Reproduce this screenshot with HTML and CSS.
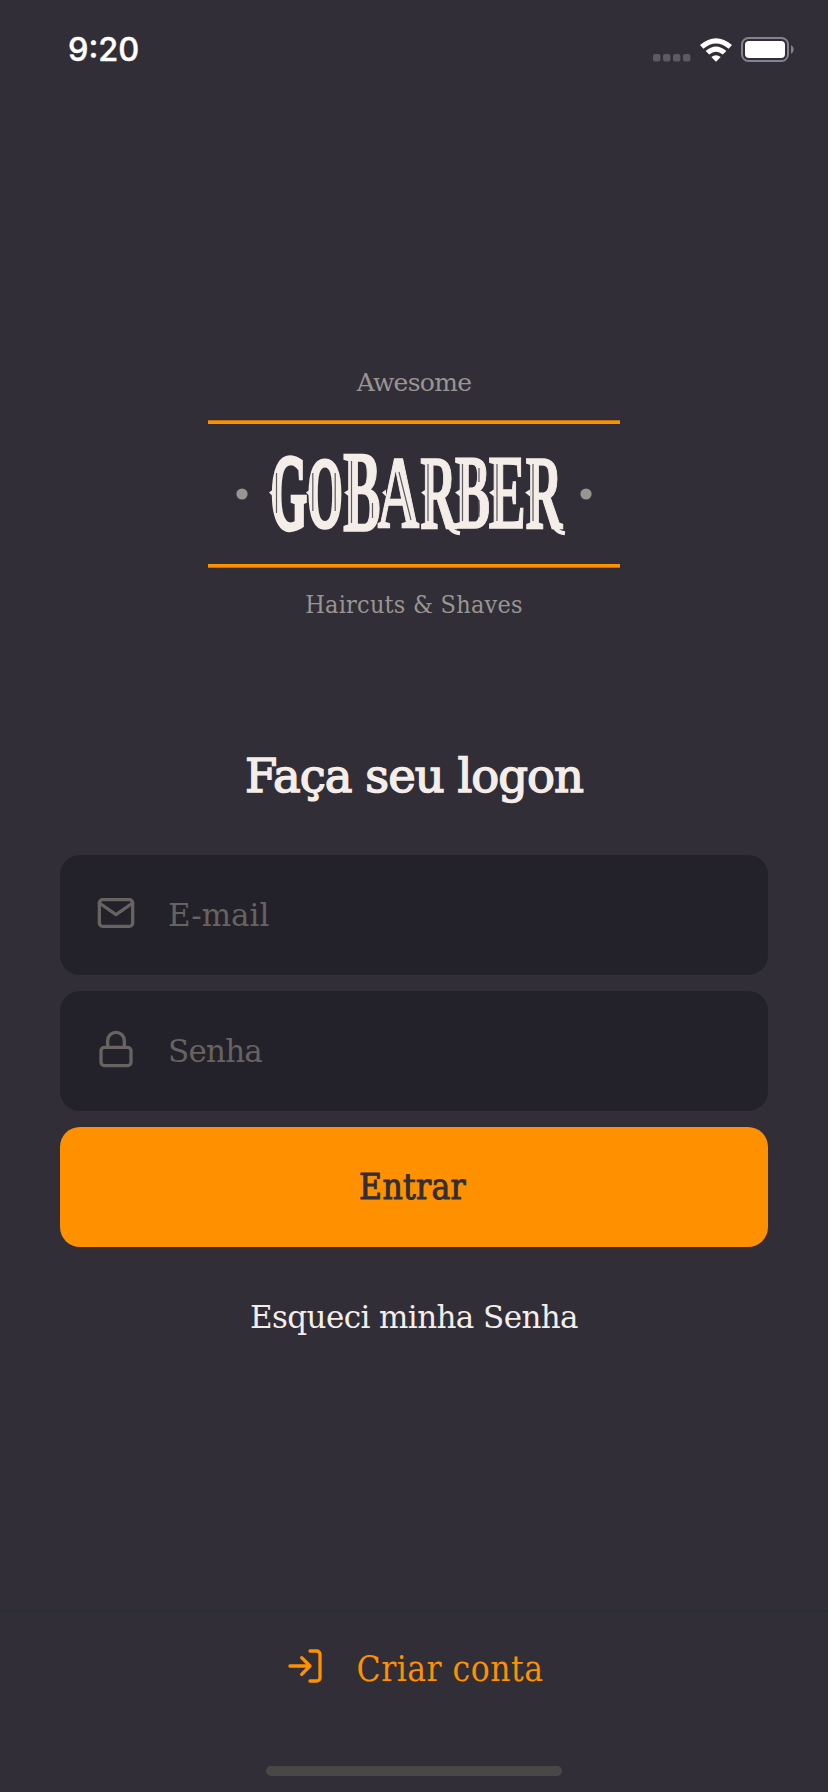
FILE: index.html
```html
<!DOCTYPE html>
<html lang="pt-BR">
<head>
<meta charset="utf-8">
<title>GoBarber</title>
<link rel="stylesheet" href="styles.css">
</head>
<body>
<div class="screen">
  <header class="status">
    <span class="time">9:20</span>
    <div class="indicators">
      <svg class="signal" width="38" height="8" viewBox="0 0 38 8"><rect width="7.4" height="7.4" rx="2"/><rect x="10" width="7.4" height="7.4" rx="2"/><rect x="20" width="7.4" height="7.4" rx="2"/><rect x="30" width="7.4" height="7.4" rx="2"/></svg>
      <svg class="wifi" width="32" height="24" viewBox="0 0 32 24"><path d="M0 7.1Q16-6.5 32 7.1L28.6 10.7Q16 .2 3.4 10.7Z"/><path d="M5.7 13Q16 4 26.3 13L22.8 16.6Q16 11 9.2 16.6Z"/><path d="M11.3 19Q16 15.4 20.7 19L16 23.8Z"/></svg>
      <svg class="battery" width="54" height="26" viewBox="0 0 54 26"><rect class="case" x="1" y="1" width="46" height="23" rx="6.5"/><rect class="charge" x="4" y="4" width="40" height="17" rx="4"/><path class="cap" d="M50 8.3c3.6 1.5 3.6 7 0 8.4Z"/></svg>
    </div>
  </header>
  <main class="content">
    <section class="brand">
      <p class="tagline awesome"><span>Awesome</span></p>
      <svg class="logo" width="412" height="150" viewBox="208 420 412 150">
        <rect class="rule" x="208" y="420.3" width="412" height="3.7"/>
        <rect class="rule" x="208" y="564" width="412" height="3.7"/>
        <circle class="dot" cx="242" cy="494" r="5.6"/><circle class="dot" cx="586" cy="494" r="5.6"/>
        <g class="wordmark">
          <text class="round" transform="translate(270.5 529) scale(.472 1.08)">G</text>
          <text class="round" transform="translate(307.3 526) scale(.455 .99)">O</text>
          <text transform="translate(343 531) scale(.565 1.154)">B</text>
          <text transform="translate(377.5 528) scale(.58 1.03)">A</text>
          <text transform="translate(420.2 528) scale(.5 1.05)">R</text>
          <text transform="translate(454.7 528) scale(.53 1.05)">B</text>
          <text transform="translate(488.5 528) scale(.56 1.05)">E</text>
          <text transform="translate(525.5 528) scale(.51 1.05)">R</text>
        </g>
        <path class="swash" d="M443 505Q447 510 447 518Q448 532 460 533.2M548 505Q552 510 552 518Q553 532 565 533.2"/>
        <path class="spur" d="M269 492.5l4-3v7zM306 492.5l4-3v7zM341 492.5l-4-3v7zM344 492.5l5-3v7zM382 492.5l4-3v7zM421 492.5l5-3v7zM455 492.5l5-3v7zM489 492.5l5-3v7zM525 492.5l5-3v7z"/>
        <path class="inline" d="M276.5 473V513M312.8 473V511M335.2 473V511M428 464V521M462.5 464V521M497 464V521M533 464V521M351.5 461V523M372.5 503V518M479 500V517M479 468V482M399 472L411 520"/>
      </svg>
      <p class="tagline haircuts"><span>Haircuts &amp; Shaves</span></p>
    </section>
    <h1 class="title"><span>Faça seu logon</span></h1>
    <form class="form">
      <label class="field">
        <svg class="icon" viewBox="0 0 24 24"><path d="M4 4h16a2 2 0 0 1 2 2v12a2 2 0 0 1-2 2H4a2 2 0 0 1-2-2V6a2 2 0 0 1 2-2Z"/><path d="m22 6-10 7L2 6"/></svg>
        <input class="entry email" type="text" placeholder="E-mail">
      </label>
      <label class="field">
        <svg class="icon lock" viewBox="0 0 24 24"><rect x="3" y="11" width="18" height="11" rx="2"/><path d="M7 11V7a5 5 0 0 1 10 0v4"/></svg>
        <input class="entry senha" type="password" placeholder="Senha">
      </label>
      <button class="submit" type="button">Entrar</button>
    </form>
    <a class="forgot">Esqueci minha Senha</a>
  </main>
  <footer class="footer">
    <a class="signup">
      <svg class="icon login" viewBox="0 0 24 24"><path d="M15 3h4a2 2 0 0 1 2 2v14a2 2 0 0 1-2 2h-4M10 17l5-5-5-5M15 12H3"/></svg>
      <span>Criar conta</span>
    </a>
    <div class="home-bar"></div>
  </footer>
</div>
</body>
</html>
```
FILE: styles.css
```css
* { box-sizing: border-box; }
body { margin: 0; background: #312e38; }
p, h1 { margin: 0; }
.screen {
  width: 828px;
  height: 1792px;
  display: flex;
  flex-direction: column;
  background: #312e38;
  color: #f4ede8;
  font-family: "DejaVu Serif", serif;
  overflow: hidden;
}
.status {
  height: 98px;
  padding: 0 33px 0 68px;
  display: flex;
  justify-content: space-between;
  align-items: center;
  color: #fff;
}
.time { padding-top: 2px; font: 500 32.5px/40px Inter, sans-serif; -webkit-text-stroke: 0.4px #fff; }
.indicators { display: flex; align-items: center; padding-top: 1px; }
.signal { fill: #5d5a63; margin: 16px 9px 0 0; }
.wifi { fill: #fff; margin-right: 9px; }
.case { fill: none; stroke: #84828a; stroke-width: 2; }
.charge { fill: #fff; }
.cap { fill: #84828a; }
.content { height: 1512px; display: flex; flex-direction: column; align-items: center; }
.brand { padding-top: 265px; display: flex; flex-direction: column; align-items: center; }
.tagline { font-size: 25px; line-height: 40px; color: #999591; }
.awesome { margin-bottom: 17px; letter-spacing: -0.7px; }
.logo { display: block; }
.haircuts, .submit, .signup { font-family: "DejaVu Serif Condensed", "DejaVu Serif", serif; font-stretch: condensed; }
.haircuts { margin-top: 15px; letter-spacing: 0.22px; }
.rule { fill: #ff9000; }
.dot { fill: #999591; }
.wordmark { fill: #f4ede8; stroke: #f4ede8; stroke-width: 1.5; font: bold 100px "Liberation Serif", serif; }
.round { stroke-width: 4; }
.swash { fill: none; stroke: #f4ede8; stroke-width: 4; }
.spur { fill: #f4ede8; }
.inline { fill: none; stroke: #5d5961; stroke-width: 1.2; }
.title {
  margin-top: 121px;
  font-size: 46.5px;
  line-height: 60px;
  font-weight: 400;
  letter-spacing: -1px;
  -webkit-text-stroke: 1.5px #f4ede8;
}
.form { width: 708px; margin-top: 49px; display: flex; flex-direction: column; gap: 16px; }
.field {
  height: 120px;
  padding: 0 36px;
  display: flex;
  align-items: center;
  border-radius: 20px;
  background: #232129;
}
.icon {
  width: 40px;
  height: 40px;
  flex: none;
  margin-bottom: 4px;
  fill: none;
  stroke: #666360;
  stroke-width: 2;
  stroke-linecap: round;
  stroke-linejoin: round;
}
.entry {
  flex: 1;
  margin-left: 32px;
  padding: 0;
  border: 0;
  outline: 0;
  background: none;
  font: inherit;
  font-size: 31px;
  color: #f4ede8;
}
.senha { letter-spacing: -0.8px; }
.entry::placeholder { color: #666360; opacity: 1; }
.submit {
  height: 120px;
  border: 0;
  border-radius: 20px;
  background: #ff9000;
  color: #312e38;
  font-size: 35px;
  letter-spacing: 0.35px;
  padding: 0 3px 0 0;
  -webkit-text-stroke: 1px #312e38;
}
.forgot { margin-top: 50px; font-size: 31px; line-height: 40px; letter-spacing: -0.6px; }
.footer {
  height: 182px;
  border-top: 2px solid #28302d;
  display: flex;
  flex-direction: column;
  align-items: center;
}
.signup { margin-top: 33px; display: flex; align-items: center; gap: 32px; color: #ff9000; font-size: 35px; line-height: 48px; letter-spacing: 0.5px; }
.login { stroke: #ff9000; margin-bottom: 6px; }
.home-bar { width: 296px; height: 10px; margin-top: 73px; border-radius: 5px; background: #494846; }
```
